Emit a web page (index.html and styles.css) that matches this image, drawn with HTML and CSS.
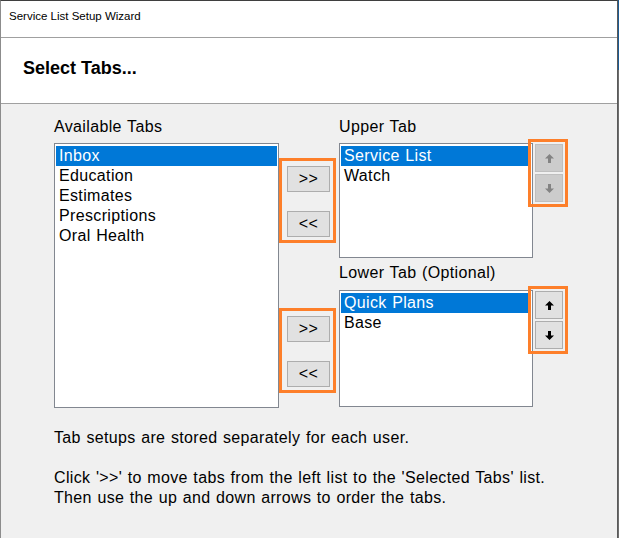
FILE: index.html
```html
<!DOCTYPE html>
<html lang="en">
<head>
<meta charset="utf-8">
<title>Service List Setup Wizard</title>
<link rel="stylesheet" href="styles.css">
</head>
<body>
<div class="window">
  <div class="titlebar">Service List Setup Wizard</div>
  <div class="header"><h1 class="heading">Select Tabs...</h1></div>
  <div class="content">
    <div class="lists">
      <div class="col col-left">
        <div class="label">Available Tabs</div>
        <ul class="listbox listbox-avail">
          <li class="item selected">Inbox</li>
          <li class="item">Education</li>
          <li class="item">Estimates</li>
          <li class="item">Prescriptions</li>
          <li class="item">Oral Health</li>
        </ul>
      </div>
      <div class="col col-mid">
        <div class="move-group hl move-upper">
          <button class="btn move-btn" type="button">&gt;&gt;</button>
          <button class="btn move-btn" type="button">&lt;&lt;</button>
        </div>
        <div class="move-group hl move-lower">
          <button class="btn move-btn" type="button">&gt;&gt;</button>
          <button class="btn move-btn" type="button">&lt;&lt;</button>
        </div>
      </div>
      <div class="col col-right">
        <div class="label">Upper Tab</div>
        <div class="list-row">
          <ul class="listbox listbox-upper">
            <li class="item selected">Service List</li>
            <li class="item">Watch</li>
          </ul>
          <div class="order-group hl">
            <button class="btn arrow-btn" type="button" disabled>
              <svg class="arrow" width="9" height="9" viewBox="0 0 9 9"><path d="M4.5 0 L9 4.5 H6 V9 H3 V4.5 H0 Z"/></svg>
            </button>
            <button class="btn arrow-btn" type="button" disabled>
              <svg class="arrow" width="9" height="9" viewBox="0 0 9 9"><path d="M4.5 9 L9 4.5 H6 V0 H3 V4.5 H0 Z"/></svg>
            </button>
          </div>
        </div>
        <div class="label label-lower">Lower Tab (Optional)</div>
        <div class="list-row">
          <ul class="listbox listbox-lower">
            <li class="item selected">Quick Plans</li>
            <li class="item">Base</li>
          </ul>
          <div class="order-group hl">
            <button class="btn arrow-btn" type="button">
              <svg class="arrow" width="9" height="9" viewBox="0 0 9 9"><path d="M4.5 0 L9 4.5 H6 V9 H3 V4.5 H0 Z"/></svg>
            </button>
            <button class="btn arrow-btn" type="button">
              <svg class="arrow" width="9" height="9" viewBox="0 0 9 9"><path d="M4.5 9 L9 4.5 H6 V0 H3 V4.5 H0 Z"/></svg>
            </button>
          </div>
        </div>
      </div>
    </div>
    <p class="note note-first">Tab setups are stored separately for each user.</p>
    <p class="note">Click '&gt;&gt;' to move tabs from the left list to the 'Selected Tabs' list.<br>Then use the up and down arrows to order the tabs.</p>
  </div>
</div>
</body>
</html>
```
FILE: styles.css
```css
* { box-sizing: border-box; }

html, body {
  margin: 0;
  padding: 0;
  height: 100%;
}

body {
  font-family: "Liberation Sans", Arial, sans-serif;
  font-size: 16px;
  color: #000;
  background: linear-gradient(#1d5a92 0, #1d5a92 70px, #6e6e6e 70px);
}

.window {
  width: 618px;
  min-height: 100%;
  background: #f0f0f0;
  border-top: 1px solid #3f3f3f;
  border-left: 1px solid #8c8c8c;
  border-right: 1px solid #5a5a5a;
}

.titlebar {
  height: 37px;
  background: #fff;
  border-bottom: 1px solid #a0a0a0;
  font-size: 11.5px;
  line-height: 16px;
  padding: 7px 0 0 8px;
}

.header {
  height: 66px;
  background: #fff;
  border-bottom: 1px solid #a0a0a0;
  padding: 19px 0 0 22px;
}

.heading {
  margin: 0;
  font-size: 18px;
  font-weight: bold;
  line-height: 22px;
}

.content {
  padding: 13px 0 0 53px;
}

.lists {
  display: flex;
  align-items: flex-start;
}

.label,
.item,
.note {
  letter-spacing: 0.35px;
  word-spacing: 0.75px;
}

.label {
  line-height: 20px;
  height: 20px;
  margin-bottom: 6px;
}

.label-lower {
  margin-top: 5px;
  margin-bottom: 7px;
}

.listbox {
  list-style: none;
  margin: 0;
  padding: 2px 1px;
  background: #fff;
  border: 1px solid #828790;
}

.listbox-avail { width: 225px; height: 265px; }
.listbox-upper { width: 194px; height: 115px; }
.listbox-lower { width: 194px; height: 117px; }

.item {
  height: 20px;
  line-height: 19px;
  padding-left: 3px;
  white-space: nowrap;
}

.item.selected {
  background: #0078d7;
  color: #fff;
}

.col-mid {
  width: 60px;
  display: flex;
  flex-direction: column;
}

.hl {
  outline: 3px solid #fd7f2a;
}

.move-group {
  margin-left: 3px;
  width: 51px;
  padding: 5px 3px 3px 5px;
  display: flex;
  flex-direction: column;
  gap: 19px;
}

.move-upper { margin-top: 44px; }
.move-lower { margin-top: 71px; }

.btn {
  font-family: "Liberation Sans", Arial, sans-serif;
  font-size: 16px;
  color: #000;
  background: #e1e1e1;
  border: 1px solid #adadad;
  padding: 0;
  margin: 0;
  display: flex;
  align-items: center;
  justify-content: center;
}

.move-btn {
  width: 43px;
  height: 26px;
  line-height: 24px;
  letter-spacing: 0.5px;
}

.list-row {
  display: flex;
  align-items: flex-start;
}

.order-group {
  margin: -1px 0 0 -2px;
  width: 34px;
  padding: 2px 2px 2px 4px;
  display: flex;
  flex-direction: column;
  gap: 2px;
  position: relative;
}

.arrow-btn {
  width: 28px;
  height: 28px;
}

.arrow { display: block; fill: #000; }

.arrow-btn:disabled {
  background: #cccccc;
  border-color: #bfbfbf;
}

.arrow-btn:disabled .arrow { fill: #838383; }

.note {
  margin: 20px 0 0 0;
  line-height: 20px;
}
```
